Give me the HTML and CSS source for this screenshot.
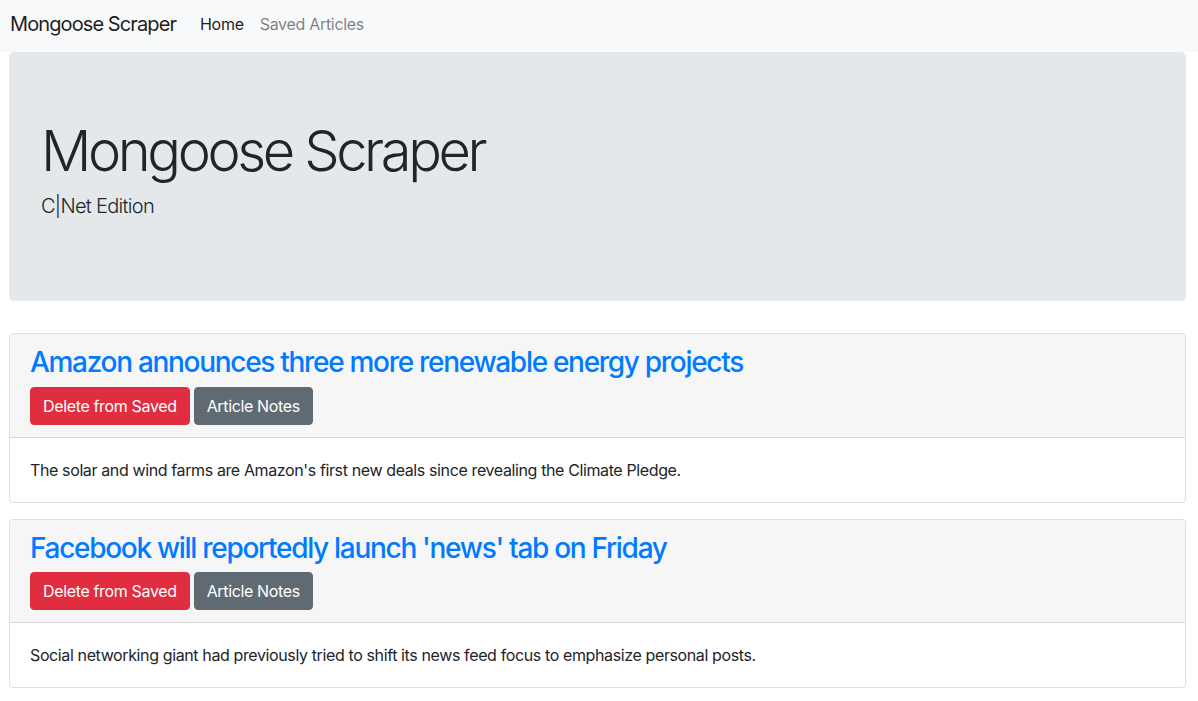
FILE: index.html
```html
<!DOCTYPE html>
<html lang="en">
<head>
<meta charset="utf-8">
<title>Mongoose Scraper</title>
<link rel="stylesheet" href="styles.css">
</head>
<body>
<nav class="navbar">
  <a class="brand" href="#">Mongoose Scraper</a>
  <ul class="nav">
    <li><a class="nav-link active" href="#">Home</a></li>
    <li><a class="nav-link" href="#">Saved Articles</a></li>
  </ul>
</nav>
<main class="page">
  <section class="jumbotron">
    <h1 class="display">Mongoose Scraper</h1>
    <p class="lead">C|Net Edition</p>
  </section>
  <article class="card">
    <div class="card-header">
      <h3 class="card-title"><a href="#">Amazon announces three more renewable energy projects</a></h3>
      <div class="actions">
        <button class="btn btn-danger">Delete from Saved</button>
        <button class="btn btn-secondary">Article Notes</button>
      </div>
    </div>
    <div class="card-body">
      <p>The solar and wind farms are Amazon's first new deals since revealing the Climate Pledge.</p>
    </div>
  </article>
  <article class="card">
    <div class="card-header">
      <h3 class="card-title"><a href="#">Facebook will reportedly launch 'news' tab on Friday</a></h3>
      <div class="actions">
        <button class="btn btn-danger">Delete from Saved</button>
        <button class="btn btn-secondary">Article Notes</button>
      </div>
    </div>
    <div class="card-body">
      <p>Social networking giant had previously tried to shift its news feed focus to emphasize personal posts.</p>
    </div>
  </article>
</main>
</body>
</html>
```
FILE: styles.css
```css
* { box-sizing: border-box; }
html, body { margin: 0; padding: 0; }
body {
  font-family: Inter, "Noto Sans", "Liberation Sans", sans-serif;
  font-size: 16px;
  line-height: 1.5;
  color: #212529;
  background: #fff;
}
a { text-decoration: none; }

.navbar {
  display: flex;
  align-items: center;
  height: 52px;
  padding: 0 10px 4px;
  background: #f8f9fa;
}
.brand {
  font-size: 20px;
  line-height: 30px;
  letter-spacing: -0.9px;
  color: rgba(0,0,0,.9);
  margin-right: 16px;
}
.nav {
  display: flex;
  list-style: none;
  margin: 0;
  padding: 0;
}
.nav-link {
  display: block;
  padding: 8px 8px;
  letter-spacing: -0.3px;
  color: rgba(0,0,0,.5);
}
.nav-link.active { color: rgba(0,0,0,.9); }

.page {
  padding: 0 12px 20px 9px;
}
.jumbotron {
  background: #e4e8eb;
  border-radius: 5px;
  padding: 64px 32px;
  margin-bottom: 32px;
}
.display {
  margin: 0 0 8px;
  padding-top: 3px;
  font-size: 56px;
  font-weight: 300;
  line-height: 64px;
  letter-spacing: -3.4px;
}
.lead {
  margin: 0 0 16px;
  font-size: 20px;
  font-weight: 300;
  line-height: 30px;
  letter-spacing: -0.7px;
}

.card {
  border: 1px solid rgba(0,0,0,.125);
  border-radius: 4px;
  margin-bottom: 16px;
  overflow: hidden;
}
.card-header {
  background: #f6f6f6;
  padding: 12px 20px;
  border-bottom: 1px solid rgba(0,0,0,.125);
}
.card-title {
  margin: 0 0 7px;
  font-size: 28px;
  font-weight: 500;
  line-height: 1.2;
  letter-spacing: -1.3px;
}
.card-title a { color: #007bff; }
.actions {
  display: flex;
  gap: 4px;
}
.btn {
  font-family: inherit;
  font-size: 16px;
  line-height: 24px;
  padding: 6px 12px;
  border: 1px solid transparent;
  border-radius: 4px;
  letter-spacing: -0.35px;
  color: #fff;
  cursor: pointer;
}
.btn-danger { background: #e02d40; border-color: #e02d40; }
.btn-secondary { background: #5f6a72; border-color: #5f6a72; }
.card-body {
  padding: 20px;
}
.card-body p { margin: 0; letter-spacing: -0.38px; }
```
